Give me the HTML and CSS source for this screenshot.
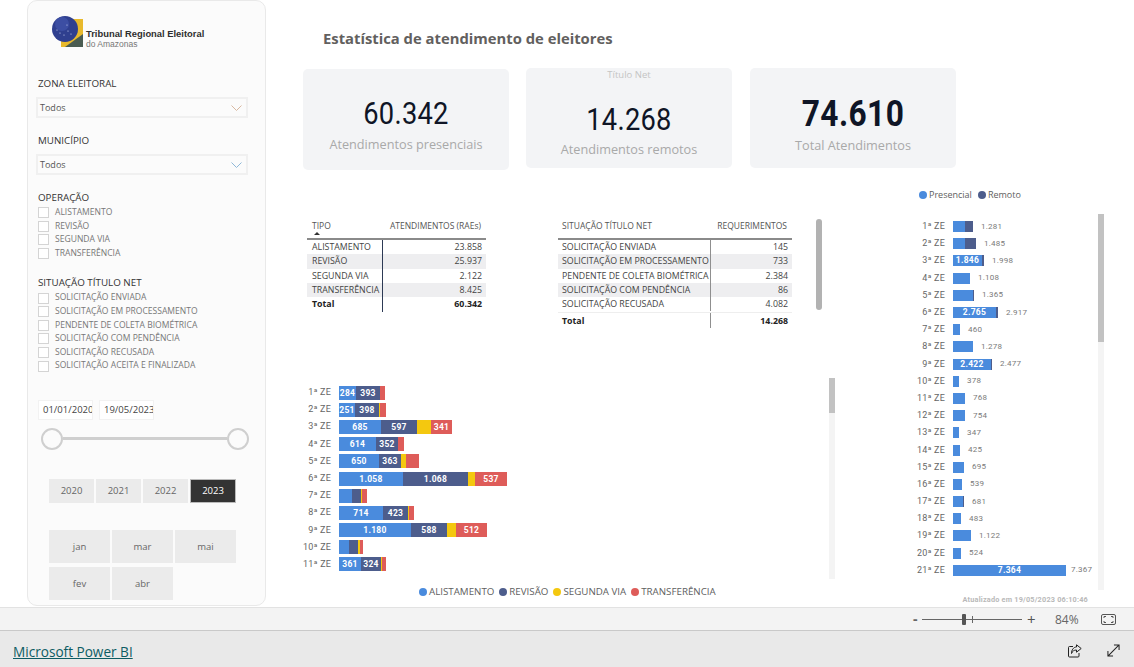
FILE: index.html
```html
<!DOCTYPE html>
<html lang="pt-BR">
<head>
<meta charset="utf-8">
<title>Estatística de atendimento de eleitores</title>
<link rel="stylesheet" href="styles.css">
</head>
<body>
<div class="app">
  <div class="canvas">
    <aside class="sidebar">
      <div class="logo">
        <svg class="logo-mark" width="32" height="32" viewBox="0 0 32 32">
          <rect x="9" y="3" width="22" height="28" fill="#e8b92c"/>
          <polygon points="13,31 31,18 31,31" fill="#4a5c52"/>
          <circle cx="13" cy="13" r="13" fill="#2f3f8f"/>
          <circle cx="10" cy="8" r="7" fill="#3c4ea3"/>
          <g fill="#cdd6f2"><circle cx="8" cy="17" r=".6"/><circle cx="12" cy="19" r=".6"/><circle cx="16" cy="15" r=".6"/><circle cx="19" cy="18" r=".6"/><circle cx="15" cy="9" r=".6"/><circle cx="5" cy="14" r=".6"/></g>
        </svg>
        <div class="logo-text"><b>Tribunal Regional Eleitoral</b><span>do Amazonas</span></div>
      </div>
      <div class="slicer-label first">ZONA ELEITORAL</div>
      <div class="dropdown"><span>Todos</span><svg width="11" height="6" viewBox="0 0 11 6"><path d="M.5.5l5 5 5-5" fill="none" stroke="#d8b8a0"/></svg></div>
      <div class="slicer-label gap">MUNICÍPIO</div>
      <div class="dropdown"><span>Todos</span><svg width="11" height="6" viewBox="0 0 11 6"><path d="M.5.5l5 5 5-5" fill="none" stroke="#8fb8d8"/></svg></div>
      <div class="slicer-label gap">OPERAÇÃO</div>
      <ul class="checks">
        <li>ALISTAMENTO</li><li>REVISÃO</li><li>SEGUNDA VIA</li><li>TRANSFERÊNCIA</li>
      </ul>
      <div class="slicer-label gap">SITUAÇÃO TÍTULO NET</div>
      <ul class="checks">
        <li>SOLICITAÇÃO ENVIADA</li><li>SOLICITAÇÃO EM PROCESSAMENTO</li><li>PENDENTE DE COLETA BIOMÉTRICA</li><li>SOLICITAÇÃO COM PENDÊNCIA</li><li>SOLICITAÇÃO RECUSADA</li><li>SOLICITAÇÃO ACEITA E FINALIZADA</li>
      </ul>
      <div class="dates"><div class="date">01/01/2020</div><div class="date">19/05/2023</div></div>
      <div class="slider"><i></i><b></b><i></i></div>
      <div class="years"><div>2020</div><div>2021</div><div>2022</div><div class="on">2023</div></div>
      <div class="months"><div>jan</div><div>mar</div><div>mai</div><div>fev</div><div>abr</div></div>
    </aside>
    <main class="report">
      <header class="top">
        <h1>Estatística de atendimento de eleitores</h1>
        <div class="cards">
          <section class="card c1"><div class="num">60.342</div><div class="cap">Atendimentos presenciais</div></section>
          <section class="card c2"><div class="tag">Título Net</div><div class="num">14.268</div><div class="cap">Atendimentos remotos</div></section>
          <section class="card c3"><div class="num big">74.610</div><div class="cap">Total Atendimentos</div></section>
        </div>
      </header>
      <div class="lower">
        <div class="left">
          <div class="tables">
            <div class="tbl t1">
              <div class="row head"><div>TIPO<span class="caret"></span></div><div>ATENDIMENTOS (RAEs)</div></div>
              <div class="row"><div>ALISTAMENTO</div><div>23.858</div></div>
              <div class="row alt"><div>REVISÃO</div><div>25.937</div></div>
              <div class="row"><div>SEGUNDA VIA</div><div>2.122</div></div>
              <div class="row alt"><div>TRANSFERÊNCIA</div><div>8.425</div></div>
              <div class="row total"><div>Total</div><div>60.342</div></div>
            </div>
            <div class="tbl t2">
              <div class="row head"><div>SITUAÇÃO TÍTULO NET</div><div>REQUERIMENTOS</div></div>
              <div class="row"><div>SOLICITAÇÃO ENVIADA</div><div>145</div></div>
              <div class="row alt"><div>SOLICITAÇÃO EM PROCESSAMENTO</div><div>733</div></div>
              <div class="row"><div>PENDENTE DE COLETA BIOMÉTRICA</div><div>2.384</div></div>
              <div class="row alt"><div>SOLICITAÇÃO COM PENDÊNCIA</div><div>86</div></div>
              <div class="row"><div>SOLICITAÇÃO RECUSADA</div><div>4.082</div></div>
              <div class="row total"><div>Total</div><div>14.268</div></div>
            </div>
            <div class="table-scroll"></div>
          </div>
          <div class="stack-wrap">
            <div class="stack">
              <div class="bar"><label>1ª ZE</label><span class="a" style="width:17px">284</span><span class="r" style="width:24px">393</span><span class="t" style="width:5px"></span></div>
              <div class="bar"><label>2ª ZE</label><span class="a" style="width:16px">251</span><span class="r" style="width:24px">398</span><span class="y" style="width:1px"></span><span class="t" style="width:6px"></span></div>
              <div class="bar"><label>3ª ZE</label><span class="a" style="width:42px">685</span><span class="r" style="width:36px">597</span><span class="y" style="width:14px"></span><span class="t" style="width:21px">341</span></div>
              <div class="bar"><label>4ª ZE</label><span class="a" style="width:37px">614</span><span class="r" style="width:22px">352</span><span class="t" style="width:6px"></span></div>
              <div class="bar"><label>5ª ZE</label><span class="a" style="width:40px">650</span><span class="r" style="width:22px">363</span><span class="y" style="width:5px"></span><span class="t" style="width:13px"></span></div>
              <div class="bar"><label>6ª ZE</label><span class="a" style="width:64px">1.058</span><span class="r" style="width:65px">1.068</span><span class="y" style="width:7px"></span><span class="t" style="width:32px">537</span></div>
              <div class="bar"><label>7ª ZE</label><span class="a" style="width:13px"></span><span class="r" style="width:9px"></span><span class="y" style="width:1px"></span><span class="t" style="width:5px"></span></div>
              <div class="bar"><label>8ª ZE</label><span class="a" style="width:44px">714</span><span class="r" style="width:25px">423</span><span class="y" style="width:1px"></span><span class="t" style="width:5px"></span></div>
              <div class="bar"><label>9ª ZE</label><span class="a" style="width:72px">1.180</span><span class="r" style="width:36px">588</span><span class="y" style="width:9px"></span><span class="t" style="width:31px">512</span></div>
              <div class="bar"><label>10ª ZE</label><span class="a" style="width:10px"></span><span class="r" style="width:9px"></span><span class="y" style="width:2px"></span><span class="t" style="width:3px"></span></div>
              <div class="bar"><label>11ª ZE</label><span class="a" style="width:22px">361</span><span class="r" style="width:20px">324</span><span class="y" style="width:1px"></span><span class="t" style="width:4px"></span></div>
            </div>
            <div class="chart-scroll"><div></div></div>
          </div>
          <div class="legend bottom">
            <span><i class="a"></i>ALISTAMENTO</span><span><i class="r"></i>REVISÃO</span><span><i class="y"></i>SEGUNDA VIA</span><span><i class="t"></i>TRANSFERÊNCIA</span>
          </div>
        </div>
        <div class="right">
          <div class="legend rlegend"><span><i class="a"></i>Presencial</span><span><i class="r"></i>Remoto</span></div>
          <div class="rchart">
            <div class="hbars">
              <div class="hbar"><label>1ª ZE</label><span class="a" style="width:12px"></span><span class="r" style="width:8px"></span><em>1.281</em></div>
              <div class="hbar"><label>2ª ZE</label><span class="a" style="width:12px"></span><span class="r" style="width:11px"></span><em>1.485</em></div>
              <div class="hbar"><label>3ª ZE</label><span class="a" style="width:29px">1.846</span><span class="r" style="width:2px"></span><em>1.998</em></div>
              <div class="hbar"><label>4ª ZE</label><span class="a" style="width:17px"></span><em>1.108</em></div>
              <div class="hbar"><label>5ª ZE</label><span class="a" style="width:20px"></span><span class="r" style="width:1px"></span><em>1.365</em></div>
              <div class="hbar"><label>6ª ZE</label><span class="a" style="width:43px">2.765</span><span class="r" style="width:2px"></span><em>2.917</em></div>
              <div class="hbar"><label>7ª ZE</label><span class="a" style="width:7px"></span><em>460</em></div>
              <div class="hbar"><label>8ª ZE</label><span class="a" style="width:20px"></span><em>1.278</em></div>
              <div class="hbar"><label>9ª ZE</label><span class="a" style="width:38px">2.422</span><span class="r" style="width:1px"></span><em>2.477</em></div>
              <div class="hbar"><label>10ª ZE</label><span class="a" style="width:6px"></span><em>378</em></div>
              <div class="hbar"><label>11ª ZE</label><span class="a" style="width:12px"></span><em>768</em></div>
              <div class="hbar"><label>12ª ZE</label><span class="a" style="width:12px"></span><em>754</em></div>
              <div class="hbar"><label>13ª ZE</label><span class="a" style="width:6px"></span><em>347</em></div>
              <div class="hbar"><label>14ª ZE</label><span class="a" style="width:7px"></span><em>425</em></div>
              <div class="hbar"><label>15ª ZE</label><span class="a" style="width:11px"></span><em>695</em></div>
              <div class="hbar"><label>16ª ZE</label><span class="a" style="width:9px"></span><em>539</em></div>
              <div class="hbar"><label>17ª ZE</label><span class="a" style="width:10px"></span><span class="r" style="width:1px"></span><em>681</em></div>
              <div class="hbar"><label>18ª ZE</label><span class="a" style="width:8px"></span><em>483</em></div>
              <div class="hbar"><label>19ª ZE</label><span class="a" style="width:18px"></span><em>1.122</em></div>
              <div class="hbar"><label>20ª ZE</label><span class="a" style="width:8px"></span><em>524</em></div>
              <div class="hbar"><label>21ª ZE</label><span class="a" style="width:113px">7.364</span><em class="tight">7.367</em></div>
            </div>
            <div class="rscroll"><div></div></div>
          </div>
          <div class="updated">Atualizado em 19/05/2023 06:10:46</div>
        </div>
      </div>
    </main>
  </div>
  <div class="zoombar">
    <span class="minus">-</span>
    <div class="track"><i class="tick"></i><i class="thumb"></i></div>
    <span class="plus">+</span>
    <span class="pct">84%</span>
    <svg class="fit" width="15" height="11" viewBox="0 0 15 11"><rect x=".5" y=".5" width="14" height="10" rx="1.5" fill="none" stroke="#555"/><path d="M3 4V2.500h2M10 2.500h2V4M3 7v1.500h2M10 8.500h2V7" fill="none" stroke="#555"/></svg>
  </div>
  <footer class="footer">
    <a href="#">Microsoft Power BI</a>
    <div class="foot-icons">
      <svg width="14" height="14" viewBox="0 0 14 14"><path d="M5 2.500H1.500a1 1 0 0 0-1 1v8.500a1 1 0 0 0 1 1H10a1 1 0 0 0 1-1V9" fill="none" stroke="#222"/><path d="M8.500.8l4.700 3.700-4.700 3.700V6C6 6 4.500 7 3.500 9.500 3.500 6 5.500 3 8.500 3z" fill="none" stroke="#222"/></svg>
      <svg width="13" height="13" viewBox="0 0 14 14"><path d="M1 13L13 1M7.500 1H13v5.500M1 7.500V13h5.500" fill="none" stroke="#222" stroke-width="1.100"/></svg>
    </div>
  </footer>
</div>
</body>
</html>
```
FILE: styles.css
```css
* { box-sizing: border-box; }
html, body { margin: 0; padding: 0; background: #fff; }
body { font-family: "Open Sans", "Noto Sans", sans-serif; color: #333; overflow: hidden; }
.app { width: 1134px; height: 667px; display: flex; flex-direction: column; }
.canvas { height: 607px; display: flex; background: #fff; }

/* Sidebar */
.sidebar { width: 239px; height: 606px; margin-left: 27px; padding-left: 10px; background: #fbfbfb; border: 1px solid #e9e9e9; border-radius: 10px; flex: none; }
.logo { display: flex; margin: 15px 0 0 14px; height: 32px; }
.logo-mark { flex: none; }
.logo-text { margin-left: 2px; padding-top: 13px; display: flex; flex-direction: column; font-family: "Liberation Sans", sans-serif; color: #2e2e2e; }
.logo-text b { font-size: 9.4px; line-height: 10px; white-space: nowrap; }
.logo-text span { font-size: 8.5px; line-height: 10px; color: #777; }
.slicer-label { font-size: 9.8px; line-height: 14px; color: #333; white-space: nowrap; }
.slicer-label.first { margin-top: 29px; }
.slicer-label.gap { margin-top: 16px; }
.dropdown { width: 212px; height: 21px; margin: 6px 0 0 -2px; padding: 0 4px 0 2px; display: flex; align-items: center; justify-content: space-between; background: #fbfbfb; border: 2px solid #f0f0f0; font-size: 9px; color: #555; }
.checks { list-style: none; margin: 1px 0 0; padding: 0; }
.checks li { height: 13.6px; line-height: 13.6px; font-size: 8.55px; color: #777; display: flex; align-items: center; white-space: nowrap; }
.checks li::before { content: ""; width: 9px; height: 9px; margin-right: 6px; border: 1px solid #d4d4d4; background: #fff; flex: none; }
.dates { display: flex; gap: 6px; margin-top: 27px; }
.date { width: 55px; height: 20px; padding-left: 4px; background: #fff; border: 1px solid #f2f2f2; font-size: 9.5px; line-height: 18px; overflow: hidden; white-space: nowrap; color: #444; }
.slider { width: 208px; height: 22px; margin: 8px 0 0 3px; display: flex; align-items: center; }
.slider i { width: 22px; height: 22px; border: 2px solid #cfcfcf; border-radius: 50%; background: #fbfbfb; flex: none; }
.slider b { flex: 1; height: 3px; background: #cfcfcf; }
.years { display: flex; gap: 2px; margin: 29px 0 0 11px; }
.years div { width: 45px; height: 24px; background: #ebebeb; color: #666; font-size: 9.5px; line-height: 24px; text-align: center; }
.years .on { width: 46px; background: #333; color: #fff; border: 1px solid #bbb; line-height: 22px; }
.months { display: grid; grid-template-columns: repeat(3, 61px); grid-auto-rows: 33px; gap: 4px 2px; margin: 27px 0 0 11px; }
.months div { background: #ebebeb; color: #666; font-size: 9.5px; line-height: 33px; text-align: center; }

/* Report */
.report { flex: 1; padding-left: 37px; min-width: 0; }
.top { height: 180px; }
h1 { margin: 0 0 0 20px; padding-top: 28px; height: 48px; font-size: 14.8px; line-height: 20px; font-weight: 700; color: #62605e; white-space: nowrap; }
.cards { display: flex; margin-top: 20px; }
.card { width: 206px; height: 100px; background: #f3f4f6; border-radius: 5px; text-align: center; }
.c1 { height: 101px; margin-top: 1px; padding-top: 30px; }
.c2 { margin-left: 17px; padding-top: 1px; }
.c3 { margin-left: 18px; padding-top: 28px; }
.tag { height: 36px; font-size: 9.5px; line-height: 12px; color: #c4c4c4; }
.num { font-family: Roboto, sans-serif; font-size: 31px; line-height: 30px; letter-spacing: .3px; color: #0f1526; transform: scaleX(.88); }
.num.big { font-size: 36px; line-height: 36px; font-weight: 700; letter-spacing: .5px; }
.cap { margin-top: 7px; font-size: 12.7px; line-height: 16px; color: #a9a9a9; white-space: nowrap; }
.c2 .cap { margin-top: 6px; }
.c3 .cap { margin-top: 5px; }
.lower { display: flex; height: 427px; }
.left { width: 602px; flex: none; }
.tables { display: flex; height: 204px; padding: 39px 0 0 4px; }
.tbl { font-size: 8.8px; color: #444; }
.t1 { width: 179px; --c1: 76px; }
.t2 { width: 234px; margin-left: 72px; --c1: 153px; }
.row { display: grid; grid-template-columns: var(--c1) 1fr; height: 14.3px; line-height: 15.5px; white-space: nowrap; }
.row > div { padding: 0 5px; overflow: hidden; }
.t2 .row > div:first-child { padding-left: 4px; }
.row > div:last-child { text-align: right; padding-right: 4px; }
.row > div:first-child { border-right: 1px solid #8f8f8f; }
.t1 .row > div:first-child { border-right-color: #2d3a55; }
.row.alt { background: #eeeef0; }
.row.head { height: 21px; line-height: 14px; border-bottom: 2px solid #8a8a8a; font-size: 8.5px; color: #555; }
.row.head > div { border-right: 0 !important; position: relative; }
.row.head > div:last-child { padding-left: 0; padding-right: 5px; }
.caret { position: absolute; left: 7px; top: 13px; border: 3px solid transparent; border-top: 0; border-bottom: 3px solid #333; }
.total { font-weight: 700; color: #222; }
.t1 .total { height: 14.5px; }
.t2 .total { margin-top: 1px; height: 16px; line-height: 16px; border-top: 1px solid #eee; }
.table-scroll { width: 6px; height: 91px; margin-left: 24px; background: #b2b2b2; border-radius: 3px; }
.stack-wrap { display: flex; height: 196px; }
.stack { width: 526px; display: grid; grid-auto-rows: 17.2px; align-content: start; }
.bar, .hbar { display: flex; align-items: center; white-space: nowrap; }
.bar label { width: 28px; margin-right: 8px; text-align: right; font: 9px/1 Roboto, sans-serif; color: #666; letter-spacing: .2px; flex: none; }
.bar span { height: 14px; }
.bar span, .hbar span { font: 700 8.5px/14px Roboto, sans-serif; letter-spacing: .3px; color: #fff; text-align: center; overflow: hidden; }
.a { background: #4a8bdd; }
.r { background: #4d5d8c; }
.y { background: #f4c80f; }
.t { background: #de5c59; }
.chart-scroll { width: 6px; height: 201px; margin-top: -6px; background: #f4f4f4; }
.chart-scroll div { height: 35px; background: #c2c2c2; }
.legend { display: flex; font-size: 9.75px; line-height: 14px; color: #606060; white-space: nowrap; }
.legend span { display: flex; align-items: center; }
.legend i { width: 8px; height: 8px; border-radius: 50%; margin-right: 2px; flex: none; }
.legend.bottom { margin: 5px 0 0 116px; gap: 5px; }
.right { flex: 1; min-width: 0; }
.rlegend { margin: 8px 0 0 14px; height: 14px; gap: 6px; font-size: 9px; }
.rchart { display: flex; margin-top: 12px; }
.hbars { width: 193px; display: grid; grid-auto-rows: 17.2px; align-content: start; padding-top: 4px; }
.hbar label { width: 40px; margin-right: 8px; text-align: right; font: 9px/1 Roboto, sans-serif; color: #666; letter-spacing: .2px; flex: none; }
.hbar span { height: 11px; line-height: 11px; }
.hbar em { margin-left: 8px; font: normal 8px/1 Roboto, sans-serif; color: #7a7a7a; letter-spacing: .2px; }
.hbar em.tight { margin-left: 5px; }
.rscroll { width: 6px; height: 376px; background: #f4f4f4; }
.rscroll div { height: 128px; background: #c2c2c2; }
.updated { width: 183px; margin-top: 4px; text-align: right; font: 700 7.3px/12px Roboto, sans-serif; letter-spacing: .2px; color: #b9b9b9; white-space: nowrap; }

/* Zoom bar and footer */
.zoombar { height: 24px; display: flex; align-items: center; background: #f3f3f3; border-top: 1px solid #e2e2e2; border-bottom: 1px solid #c9c9c9; padding-left: 913px; color: #666; flex: none; }
.minus { width: 9px; font-size: 14px; font-weight: 700; line-height: 20px; }
.track { width: 100px; height: 1px; background: #666; position: relative; }
.tick { position: absolute; left: 50px; top: -3px; width: 1px; height: 7px; background: #666; }
.thumb { position: absolute; left: 40px; top: -5px; width: 4px; height: 11px; background: #555; border-radius: 1px; }
.plus { width: 12px; margin-left: 5px; font-size: 15px; line-height: 20px; color: #555; }
.pct { width: 24px; margin-left: 16px; font-size: 12px; color: #666; }
.fit { margin-left: 22px; }
.footer { flex: 1; display: flex; align-items: center; justify-content: space-between; background: #e9e9e9; padding: 4px 14px 0 13px; }
.footer a { font-size: 13.6px; color: #0d5c63; text-decoration: underline; }
.foot-icons { display: flex; gap: 25px; }
```
